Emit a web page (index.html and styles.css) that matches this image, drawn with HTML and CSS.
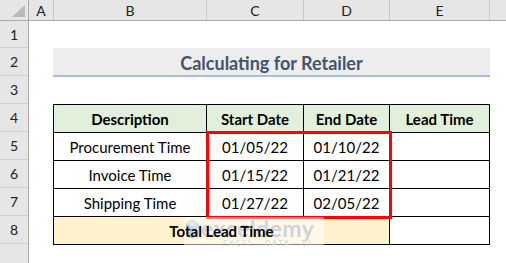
FILE: index.html
```html
<!DOCTYPE html>
<html lang="en">
<head>
    <meta charset="UTF-8">
    <title>Calculating for Retailer</title>
    <link rel="stylesheet" href="styles.css">
</head>
<body>
    <div class="sheet">
        <div class="corner"><span class="corner-mark"></span></div>
        <div class="col-heads">
            <div class="col-head col-a">A</div>
            <div class="col-head col-b">B</div>
            <div class="col-head col-c">C</div>
            <div class="col-head col-d">D</div>
            <div class="col-head col-e">E</div>
            <div class="col-head col-f"></div>
        </div>
        <div class="row-heads">
            <div class="row-head row-first">1</div>
            <div class="row-head">2</div>
            <div class="row-head">3</div>
            <div class="row-head">4</div>
            <div class="row-head">5</div>
            <div class="row-head">6</div>
            <div class="row-head">7</div>
            <div class="row-head">8</div>
            <div class="row-head"></div>
        </div>
        <div class="cells">
            <div class="title">Calculating for Retailer</div>
            <div class="table">
                <div class="cell head">Description</div>
                <div class="cell head">Start Date</div>
                <div class="cell head">End Date</div>
                <div class="cell head">Lead Time</div>

                <div class="cell">Procurement Time</div>
                <div class="cell">01/05/22</div>
                <div class="cell">01/10/22</div>
                <div class="cell"></div>

                <div class="cell">Invoice Time</div>
                <div class="cell">01/15/22</div>
                <div class="cell">01/21/22</div>
                <div class="cell"></div>

                <div class="cell">Shipping Time</div>
                <div class="cell">01/27/22</div>
                <div class="cell">02/05/22</div>
                <div class="cell"></div>

                <div class="cell total"><span class="total-text">Total Lead Time</span></div>
                <div class="cell"></div>

                <div class="highlight"></div>
                <div class="watermark">
                    <svg class="wm-logo" width="15" height="22" viewBox="0 0 15 22">
                        <path d="M7.5 1 L14 5 L14 17 L7.5 21 L1 17 L1 5 Z" fill="#d3dae3"/>
                        <path d="M7.5 1 L14 5 L7.5 9 L1 5 Z" fill="#e3e8ee"/>
                        <path d="M7.5 9 L7.5 21 L1 17 L1 5 Z" fill="#c8d0db"/>
                    </svg>
                    <div class="wm-text">
                        <span class="wm-name">exceldemy</span>
                        <span class="wm-tag">EXCEL · DATA · BI</span>
                    </div>
                </div>
            </div>
        </div>
    </div>
</body>
</html>
```

FILE: styles.css
```css
* {
    box-sizing: border-box;
}

body {
    margin: 0;
    font-family: 'Lato', 'Liberation Sans', sans-serif;
    background: #fff;
    color: #000;
}

.sheet {
    display: grid;
    grid-template-columns: 29px 1fr;
    grid-template-rows: 21px 1fr;
    width: 506px;
    height: 263px;
    overflow: hidden;
}

.corner {
    background: #e6e6e6;
    border-right: 1px solid #ababab;
    border-bottom: 1px solid #ababab;
    display: flex;
    align-items: flex-end;
    justify-content: flex-end;
    padding: 0 3px 3px 0;
}

.corner-mark {
    width: 13px;
    height: 12px;
    background: #b9b9b9;
    clip-path: polygon(100% 0, 100% 100%, 0 100%);
}

.col-heads {
    display: flex;
    background: #e6e6e6;
    border-bottom: 1px solid #ababab;
}

.col-head {
    display: flex;
    align-items: center;
    justify-content: center;
    border-right: 1px solid #c6c6c6;
    font-size: 14px;
    color: #222;
}

.col-a { width: 25px; }
.col-b { width: 153px; }
.col-c { width: 97px; }
.col-d { width: 86px; }
.col-e { width: 100px; }
.col-f { flex: 1; border-right: none; }

.row-heads {
    display: flex;
    flex-direction: column;
    background: #e6e6e6;
    border-right: 1px solid #ababab;
}

.row-head {
    height: 28px;
    flex-shrink: 0;
    display: flex;
    align-items: center;
    justify-content: center;
    border-bottom: 1px solid #cfcfcf;
    font-size: 14px;
    color: #222;
}

.row-first {
    height: 27px;
}

.cells {
    padding: 27px 0 0 24px;
}

.title {
    width: 437px;
    height: 29px;
    background: #ededed;
    border-bottom: 2px solid #a9bce2;
    display: flex;
    align-items: center;
    justify-content: center;
    padding-top: 2px;
    font-size: 18px;
    font-weight: 700;
    color: #44546a;
}

.table {
    position: relative;
    margin-top: 27px;
    display: grid;
    grid-template-columns: 153px 97px 86px 100px;
    grid-auto-rows: 28px;
    width: max-content;
    border-left: 1px solid #000;
    border-top: 1px solid #000;
}

.cell {
    border-right: 1px solid #000;
    border-bottom: 1px solid #000;
    display: flex;
    align-items: center;
    justify-content: center;
    font-size: 15px;
}

.head {
    background: #e2efda;
    font-weight: 700;
}

.total {
    grid-column: span 3;
    background: #fff2cc;
    font-weight: 700;
}

.total-text {
    position: relative;
    z-index: 2;
}

.highlight {
    position: absolute;
    left: 152px;
    top: 26px;
    width: 186px;
    height: 88px;
    border: 3px solid #ff0000;
}

.watermark {
    position: absolute;
    z-index: 1;
    left: 130px;
    top: 112px;
    width: 140px;
    height: 29px;
    display: flex;
    align-items: flex-start;
    gap: 1px;
    padding: 1px 0 0 1px;
    background: rgba(255, 255, 255, 0.5);
}

.wm-text {
    display: flex;
    flex-direction: column;
    align-items: center;
}

.wm-name {
    font-size: 23px;
    line-height: 21px;
    font-weight: 700;
    color: #cdd4de;
    letter-spacing: 0.5px;
}

.wm-tag {
    font-size: 7px;
    line-height: 8px;
    letter-spacing: 2px;
    color: #d0d4da;
    margin-left: 20px;
}
```
